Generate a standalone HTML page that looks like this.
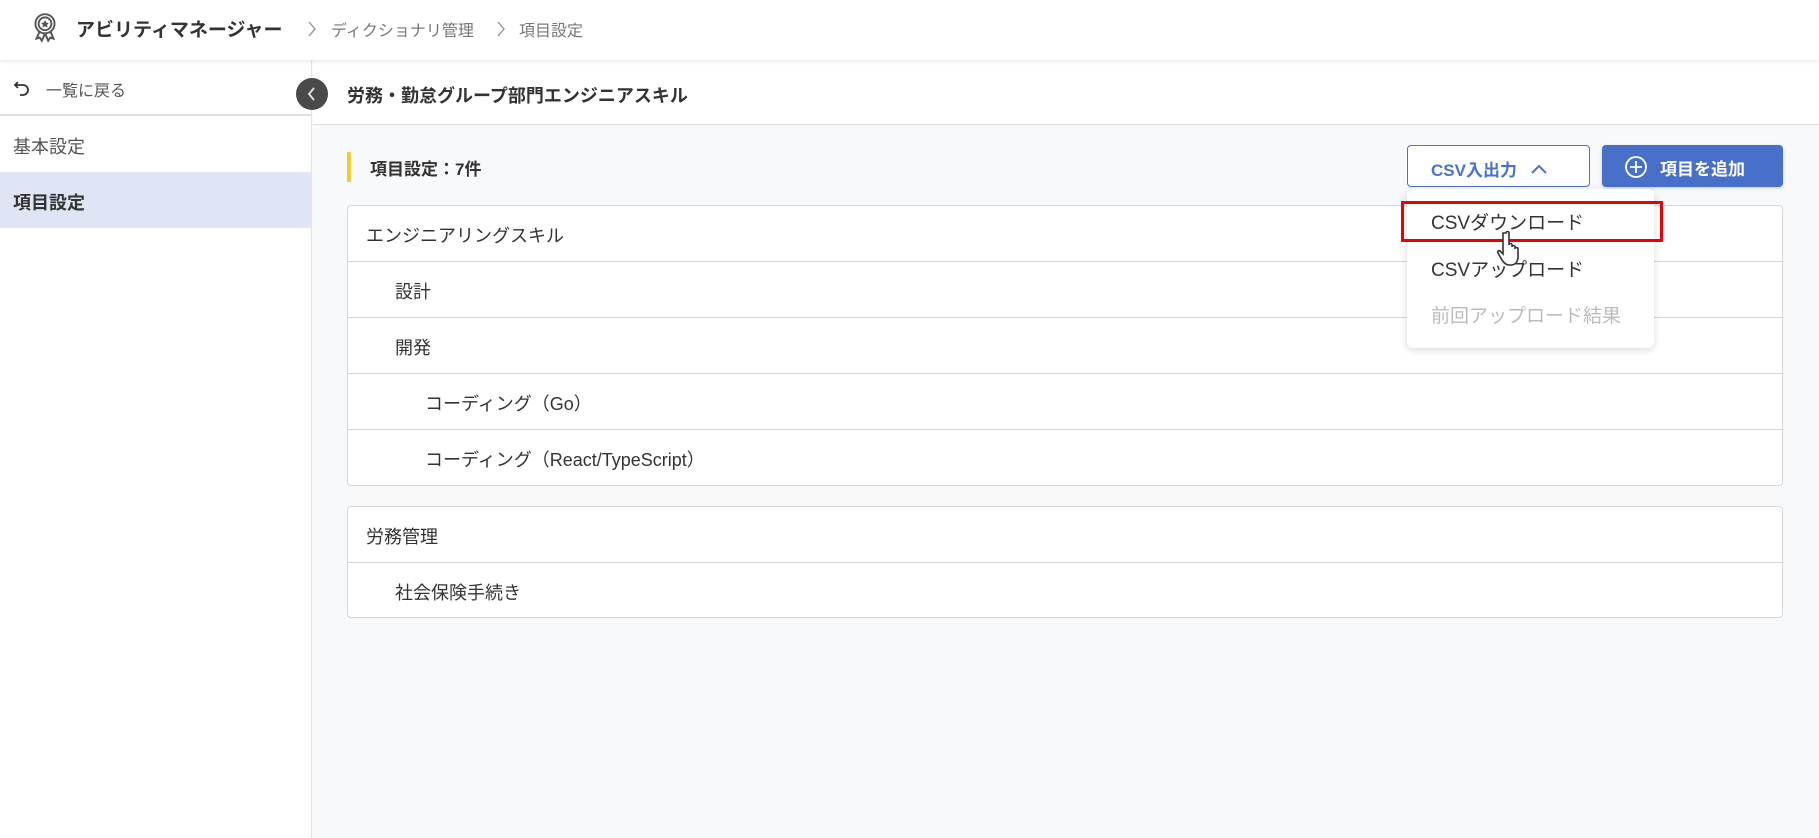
<!DOCTYPE html>
<html><head><meta charset="utf-8"><style>
*{box-sizing:border-box;margin:0;padding:0}
body{width:1819px;height:838px;overflow:hidden;background:#f8f9fb;font-family:"Liberation Sans","Noto Sans CJK JP",sans-serif;color:#333;position:relative}
.hdr{position:absolute;left:0;top:0;width:1819px;height:60px;background:#fff;box-shadow:0 2px 4px rgba(0,0,0,.08);z-index:2}
.hdr .t{position:absolute;left:76px;top:15px;font-size:19px;font-weight:bold;color:#333}
.hdr .c{position:absolute;top:17px;font-size:16px;color:#777}
.side{position:absolute;left:0;top:60px;width:312px;height:778px;background:#fff;border-right:1px solid #e4e4e4}
.back{height:56px;border-bottom:2px solid #ddd;font-size:16px;color:#555;padding:17px 0 0 46px;position:relative}
.si{height:56px;font-size:18px;padding:17px 0 0 13px;color:#555}
.si.a{background:#dfe5f5;color:#333;font-weight:bold}
.tb{position:absolute;left:313px;top:60px;width:1506px;height:65px;background:#fff;border-bottom:1px solid #ddd}
.tb span{position:absolute;left:34px;top:22px;font-size:18px;font-weight:bold}
.col{position:absolute;left:296px;top:78px;width:32px;height:32px;border-radius:50%;background:#4a4a4a;z-index:3}
.sec{position:absolute;left:347px;top:152px;width:4px;height:30px;background:#f5cc2a}
.sect{position:absolute;left:370px;top:155px;font-size:17px;font-weight:bold}
.b1{position:absolute;left:1407px;top:145px;width:183px;height:42px;border:1px solid #4a72c8;border-radius:4px;background:#fff;color:#4a72c8;font-weight:bold;font-size:17px;padding:10px 0 0 23px}
.b2{position:absolute;left:1602px;top:145px;width:181px;height:42px;border-radius:4px;background:#4870c8;color:#fff;font-weight:bold;font-size:17px;padding:10px 0 0 58px;box-shadow:0 1px 3px rgba(0,0,0,.2)}
.card{position:absolute;left:347px;width:1436px;background:#fff;border:1px solid #d6d6d6;border-radius:4px}
.row{height:56px;border-bottom:1px solid #d6d6d6;font-size:18px;padding-top:16px}
.row:last-child{border-bottom:none}
.dd{position:absolute;left:1407px;top:189px;width:247px;height:159px;background:#fff;border-radius:6px;box-shadow:0 2px 8px rgba(0,0,0,.15);z-index:4}
.dd div{position:absolute;left:24px;font-size:19px;color:#333}
.red{position:absolute;left:1401px;top:201px;width:262px;height:41px;border:3px solid #e8000b;z-index:5}
</style></head><body>
<div class="hdr">
<svg style="position:absolute;left:32px;top:11px" width="26" height="34" viewBox="0 0 24 32" fill="none" stroke="#555" stroke-width="1.8"><circle cx="12" cy="12" r="9"/><circle cx="12" cy="12" r="6"/><path d="M12 8.5l1.2 2.4 2.6.3-1.9 1.8.5 2.6-2.4-1.3-2.4 1.3.5-2.6-1.9-1.8 2.6-.3z" fill="#555" stroke="none"/><path d="M7 19l-3 7 3-1 2 3 3-7M17 19l3 7-3-1-2 3-3-7"/></svg>
<span class="t">アビリティマネージャー</span>
<svg style="position:absolute;left:307px;top:20px" width="10" height="18" viewBox="0 0 10 18"><path d="M2 2l6 7-6 7" stroke="#999" stroke-width="1.4" fill="none"/></svg>
<span class="c" style="left:331px">ディクショナリ管理</span>
<svg style="position:absolute;left:496px;top:20px" width="10" height="18" viewBox="0 0 10 18"><path d="M2 2l6 7-6 7" stroke="#999" stroke-width="1.4" fill="none"/></svg>
<span class="c" style="left:519px">項目設定</span>
</div>
<div class="side">
<div class="back"><svg style="position:absolute;left:13px;top:20px" width="18" height="16" viewBox="0 0 18 16" fill="none" stroke="#333" stroke-width="1.8"><path d="M5 2L2 5l3 3"/><path d="M2 5h8a5 5 0 010 10H7"/></svg>一覧に戻る</div>
<div class="si">基本設定</div>
<div class="si a">項目設定</div>
</div>
<div class="tb"><span>労務・勤怠グループ部門エンジニアスキル</span></div>
<div class="col"><svg width="32" height="32" viewBox="0 0 32 32"><path d="M18 10l-5 6 5 6" stroke="#ddd" stroke-width="2" fill="none"/></svg></div>
<div class="sec"></div>
<div class="sect">項目設定：7件</div>
<div class="b1">CSV入出力 <svg style="vertical-align:1px;margin-left:8px" width="18" height="11" viewBox="0 0 18 11"><path d="M2 9l7-7 7 7" stroke="#4a72c8" stroke-width="2" fill="none"/></svg></div>
<div class="b2"><svg style="position:absolute;left:22px;top:10px" width="24" height="24" viewBox="0 0 24 24" fill="none" stroke="#fff" stroke-width="1.8"><circle cx="12" cy="12" r="10"/><path d="M12 6v12M6 12h12"/></svg>項目を追加</div>
<div class="card" style="top:205px;height:281px">
<div class="row" style="padding-left:18px">エンジニアリングスキル</div>
<div class="row" style="padding-left:47px">設計</div>
<div class="row" style="padding-left:47px">開発</div>
<div class="row" style="padding-left:77px">コーディング（Go）</div>
<div class="row" style="padding-left:77px">コーディング（React/TypeScript）</div>
</div>
<div class="card" style="top:506px;height:112px">
<div class="row" style="padding-left:18px">労務管理</div>
<div class="row" style="padding-left:47px">社会保険手続き</div>
</div>
<div class="dd">
<div style="top:19px">CSVダウンロード</div>
<div style="top:66px">CSVアップロード</div>
<div style="top:112px;color:#bbb">前回アップロード結果</div>
</div>
<div class="red"></div>
<svg style="position:absolute;left:1496px;top:229px;z-index:6" width="34" height="40" viewBox="0 0 34 40"><path d="M10 4c0-2 3-2 3 0v12c0-2 3-2 3 0v2c0-2 3-2 3 0v2c0-2 3-2 3 0v8c0 5-3 8-7 8h-2c-3 0-5-2-7-5l-4-7c-1-2 1-3 2-2l3 3V4z" fill="#fff" stroke="#333" stroke-width="1.6"/></svg>
</body></html>
